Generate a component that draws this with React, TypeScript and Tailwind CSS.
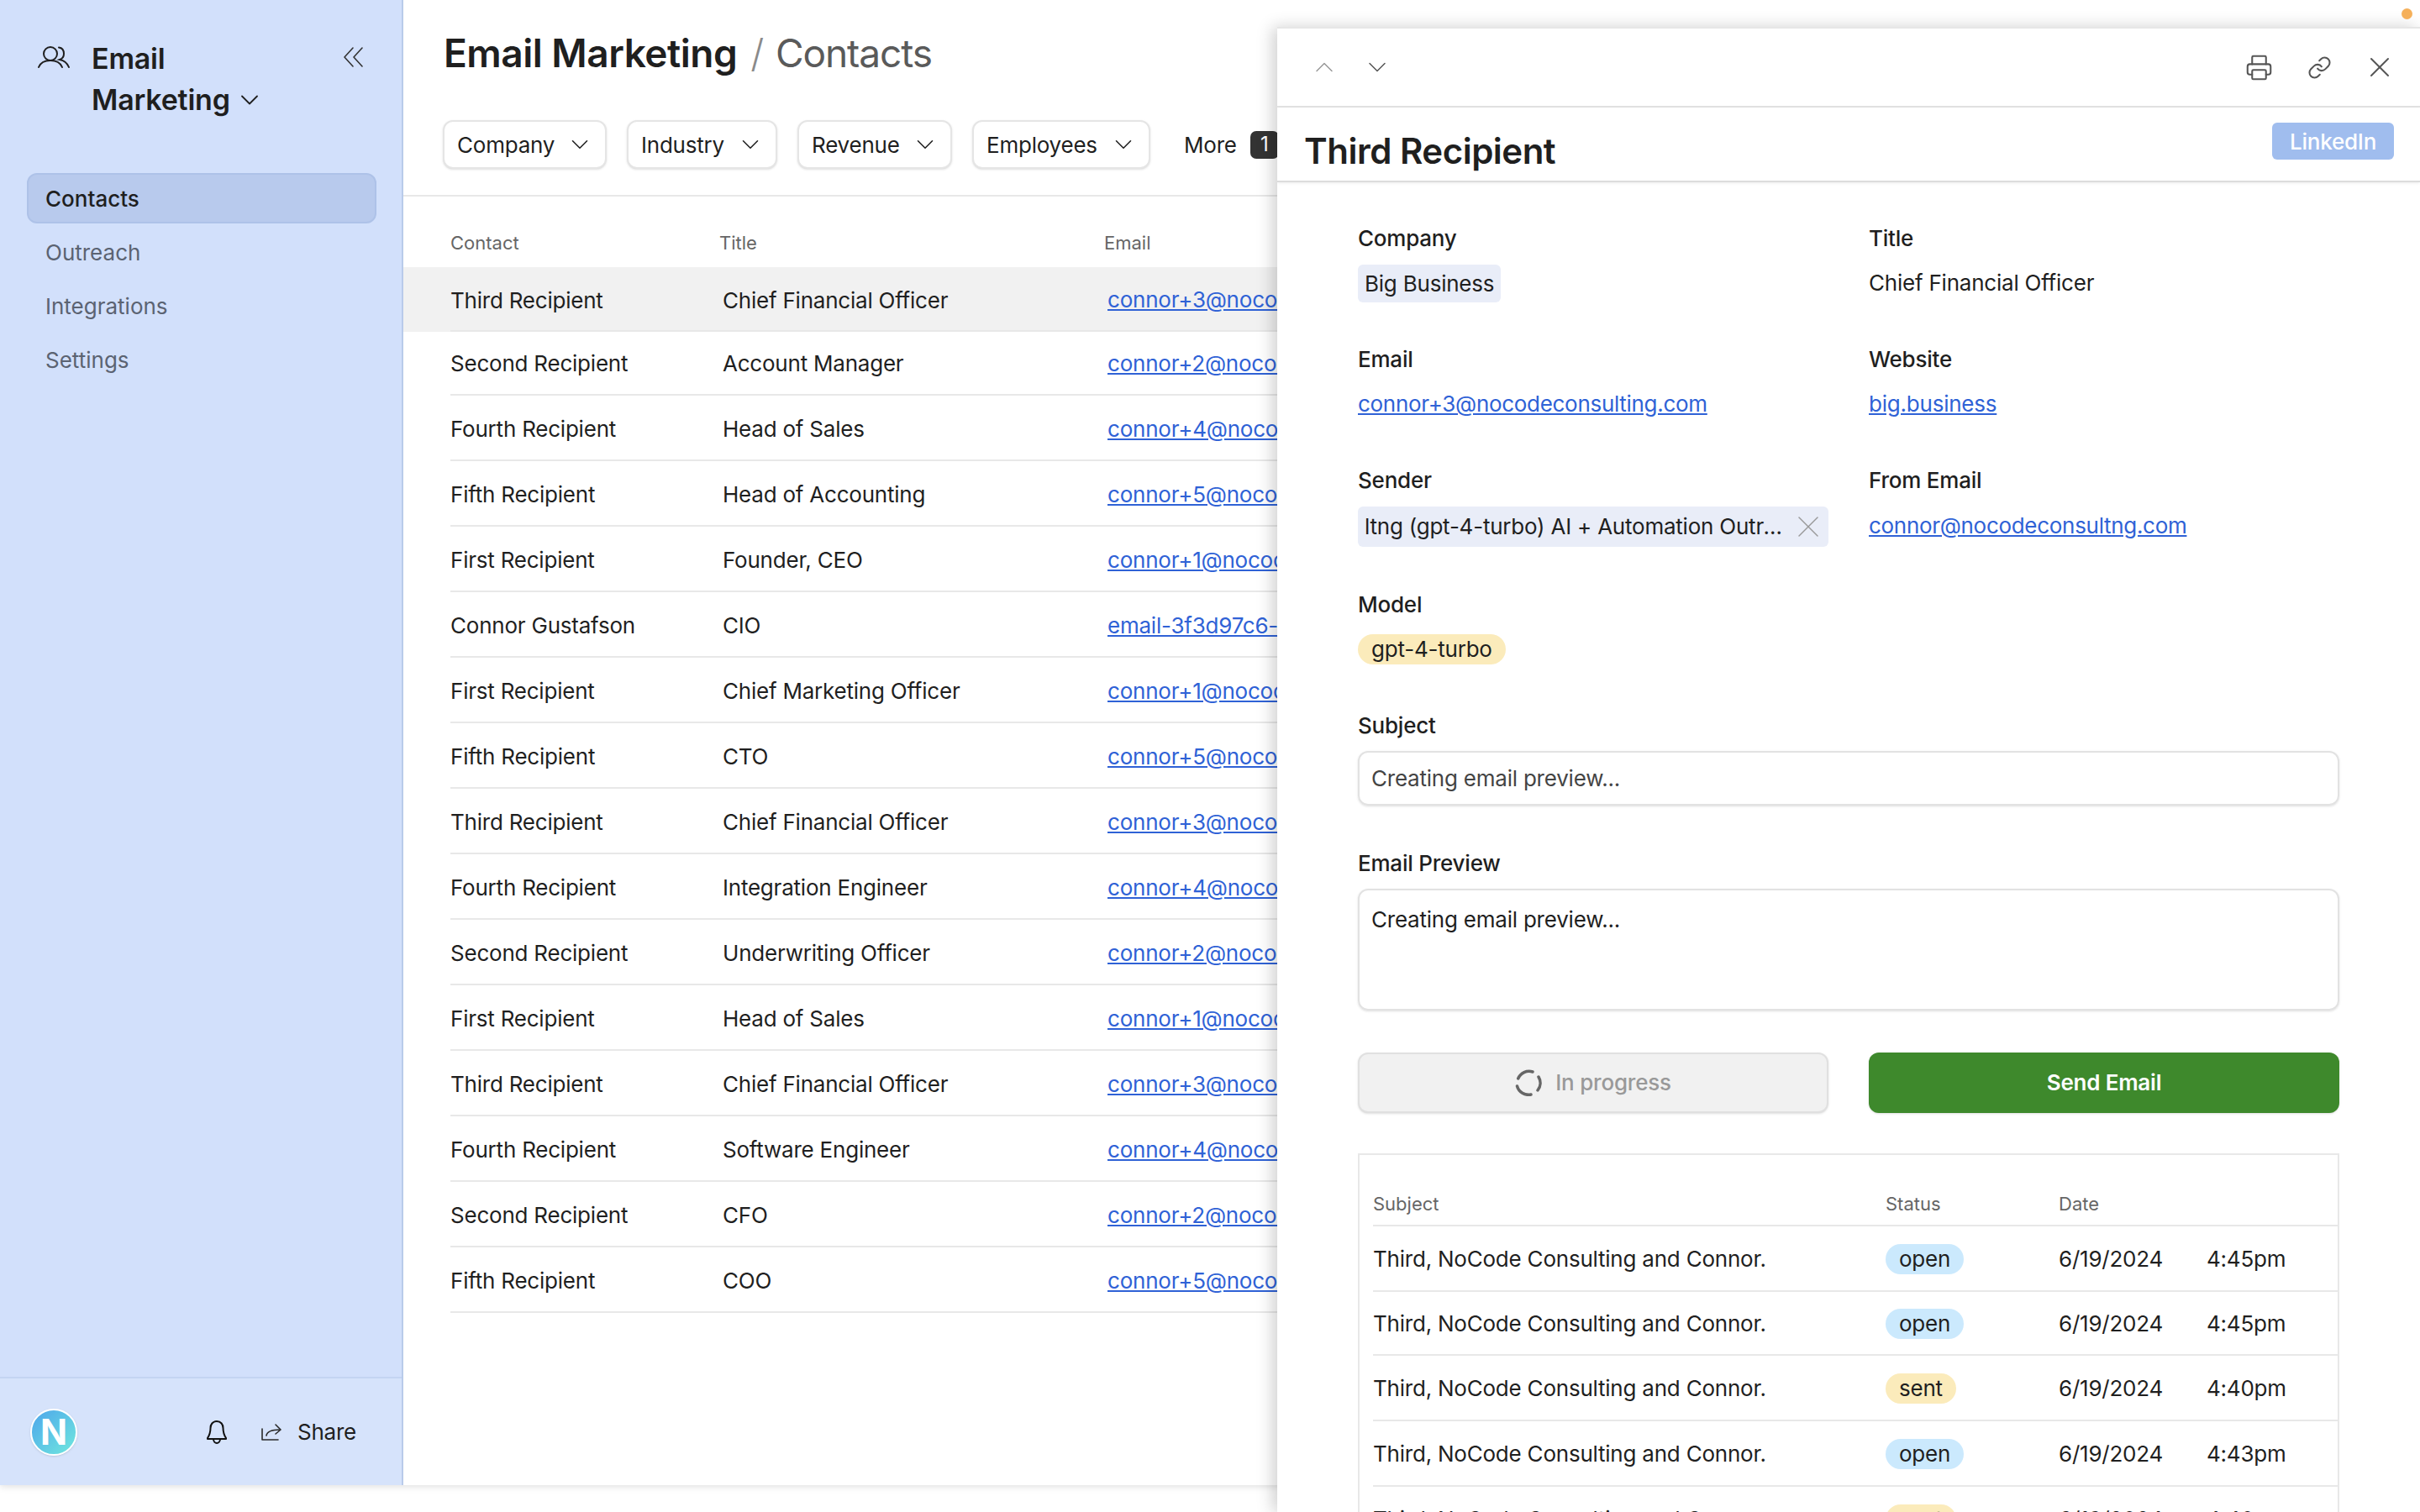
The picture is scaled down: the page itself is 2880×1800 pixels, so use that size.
import { ChevronDown, ChevronUp, Link, Printer, X } from 'lucide-react';

const contacts = [
  ['Third Recipient', 'Chief Financial Officer', 'connor+3@nocodeconsulting.com'],
  ['Second Recipient', 'Account Manager', 'connor+2@nocodeconsulting.com'],
  ['Fourth Recipient', 'Head of Sales', 'connor+4@nocodeconsulting.com'],
  ['Fifth Recipient', 'Head of Accounting', 'connor+5@nocodeconsulting.com'],
  ['First Recipient', 'Founder, CEO', 'connor+1@nocodeconsulting.com'],
  ['Connor Gustafson', 'CIO', 'email-3f3d97c6-nocodeconsulting.com'],
  ['First Recipient', 'Chief Marketing Officer', 'connor+1@nocodeconsulting.com'],
  ['Fifth Recipient', 'CTO', 'connor+5@nocodeconsulting.com'],
  ['Third Recipient', 'Chief Financial Officer', 'connor+3@nocodeconsulting.com'],
  ['Fourth Recipient', 'Integration Engineer', 'connor+4@nocodeconsulting.com'],
  ['Second Recipient', 'Underwriting Officer', 'connor+2@nocodeconsulting.com'],
  ['First Recipient', 'Head of Sales', 'connor+1@nocodeconsulting.com'],
  ['Third Recipient', 'Chief Financial Officer', 'connor+3@nocodeconsulting.com'],
  ['Fourth Recipient', 'Software Engineer', 'connor+4@nocodeconsulting.com'],
  ['Second Recipient', 'CFO', 'connor+2@nocodeconsulting.com'],
  ['Fifth Recipient', 'COO', 'connor+5@nocodeconsulting.com'],
];

const emails = [
  ['open', '4:45pm'],
  ['open', '4:45pm'],
  ['sent', '4:40pm'],
  ['open', '4:43pm'],
  ['sent', '4:40pm'],
];

const filters = [
  ['Company', 'w-[195px]'],
  ['Industry', 'w-[179px]'],
  ['Revenue', 'w-[184px]'],
  ['Employees', 'w-[212px]'],
];

const UsersIcon = () => (
  <svg width="38" height="26" viewBox="0 0 38 26" fill="none" stroke="#1f1f1f" strokeWidth="2" strokeLinecap="round">
    <circle cx="15" cy="9" r="8" />
    <path d="M1 25c2-5 7-8 14-8s12 3 14 8" />
    <path d="M25 1.5c4 .5 6 3.500 6 7.500 0 3-2 6-5 7 5 1 9 4 11 9" />
  </svg>
);

const DoubleChevronIcon = () => (
  <svg width="24" height="24" viewBox="0 0 24 24" fill="none" stroke="#333" strokeWidth="1.600" strokeLinecap="round" strokeLinejoin="round">
    <path d="M12 1 2 12l10 11" />
    <path d="M23 1 13 12l10 11" />
  </svg>
);

const ShareIcon = () => (
  <svg width="24" height="20" viewBox="0 0 24 20" fill="none" stroke="#2a2a2a" strokeWidth="1.600" strokeLinecap="round" strokeLinejoin="round">
    <path d="M1 6v13h19" />
    <path d="M6 14c1-5 6-7 16-7" />
    <path d="M17 1l6 6-6 5" />
  </svg>
);

const BellIcon = () => (
  <svg width="24" height="28" viewBox="0 0 24 28" fill="none" stroke="#111" strokeWidth="2" strokeLinejoin="round">
    <path d="M12 1c-5 0-7.500 4-7.500 8 0 6-1.500 9-3.500 12v1h22v-1c-2-3-3.500-6-3.500-12 0-4-2.500-8-7.500-8z" />
    <path d="M8 22c0 3 2 5 4 5s4-2 4-5" />
  </svg>
);

const Spinner = () => (
  <svg width="32" height="32" viewBox="0 0 32 32" fill="none" stroke="#666" strokeWidth="3.500" strokeLinecap="round">
    <path d="M3.700 11A14 14 0 0 1 21 3" />
    <path d="M28 9a14 14 0 0 1-1 16" />
    <path d="M2.500 20A14 14 0 0 0 19 30" />
  </svg>
);

const Label = ({ children }: { children: string }) => (
  <div className="h-[32px] text-[26px] leading-[32px] font-medium text-[#1f1f1f]">{children}</div>
);

const Pill = ({ status }: { status: string }) => (
  <span
    className={`inline-block h-[36px] rounded-full px-[16px] text-[26px] leading-[36px] ${
      status === 'open' ? 'bg-[#cbe9fd]' : 'bg-[#fbebbb]'
    }`}
  >
    {status}
  </span>
);

const mailLink = 'text-[26px] leading-[32px] text-[#2f62d6] underline underline-offset-2';

export default function App() {
  return (
    <div className="relative h-[1800px] w-[2880px] overflow-hidden bg-white font-[Inter,sans-serif] tracking-[-0.22px] text-[#1f1f1f]">
      <div className="flex h-[1768px] shadow-[0_2px_8px_rgba(0,0,0,0.12)]">
        {/* Sidebar */}
        <aside className="flex w-[480px] shrink-0 flex-col border-r-2 border-[#b9cbea] bg-[#d2e0fb]">
          <div className="flex items-start justify-between pt-[45px] pl-[45px] pr-[46px]">
            <div className="mt-[10px]">
              <UsersIcon />
            </div>
            <div className="ml-[26px] flex-1 text-[34px] leading-[49px] font-semibold tracking-[-0.2px]">
              Email
              <div className="flex items-center gap-[5px]">
                Marketing
                <ChevronDown size={36} strokeWidth={1.200} />
              </div>
            </div>
            <div className="mt-[11px]">
              <DoubleChevronIcon />
            </div>
          </div>

          <nav className="mt-[63px] flex flex-col pl-[32px] pr-[30px] text-[26px] tracking-normal">
            <div className="flex h-[60px] items-center rounded-[12px] border-2 border-[#aec2e8] bg-[#b8caed] pl-[20px] font-medium">
              Contacts
            </div>
            {['Outreach', 'Integrations', 'Settings'].map((item) => (
              <div key={item} className="mt-[4px] flex h-[60px] items-center pl-[22px] text-[#5b6372]">
                {item}
              </div>
            ))}
          </nav>

          <div className="mt-auto flex h-[129px] items-center border-t-2 border-[#c4d4f2] bg-[#d6e3fb] pl-[36px] pr-[54px]">
            <div className="flex h-[56px] w-[56px] items-center justify-center rounded-full border-2 border-white bg-gradient-to-br from-[#4fa5ea] to-[#71e8dd] text-[42px] font-bold text-white shadow-sm">
              N
            </div>
            <div className="ml-auto flex items-center gap-[41px]">
              <BellIcon />
              <div className="flex items-center gap-[19px] text-[26px]">
                <ShareIcon />
                Share
              </div>
            </div>
          </div>
        </aside>

        {/* Contacts list */}
        <main className="min-w-0 flex-1">
          <div className="h-[234px] border-b-2 border-[#e8e8e8] pl-[47px]">
            <div className="flex h-[143px] items-center pb-[16px] pl-[1px] text-[46px]">
              <span className="font-semibold tracking-[-0.5px]">Email Marketing</span>
              <span className="ml-[16px] font-light text-[#8a8a8a]">/</span>
              <span className="ml-[14px] tracking-[-1.100px] text-[#5a5a5a]">Contacts</span>
            </div>
            <div className="flex h-[58px] items-center gap-[24px] text-[26px]">
              {filters.map(([name, width]) => (
                <div
                  key={name}
                  className={`flex h-[58px] items-center justify-between rounded-[12px] border-2 border-[#e5e5e5] bg-white pl-[15px] pr-[13px] shadow-sm ${width}`}
                >
                  {name}
                  <ChevronDown size={34} strokeWidth={1.100} />
                </div>
              ))}
              <span className="ml-[16px]">More</span>
              <span className="-ml-[8px] flex h-[33px] w-[34px] items-center justify-center rounded-[7px] bg-[#333] text-[24px] text-white">
                1
              </span>
            </div>
          </div>

          <div className="flex h-[84px] items-center pl-[56px] pt-[26px] text-[22px] tracking-normal text-[#666]">
            <span className="w-[320px]">Contact</span>
            <span className="w-[458px]">Title</span>
            <span>Email</span>
          </div>

          {contacts.map(([name, title, email], index) => (
            <div
              key={index}
              className={`flex items-center text-[26px] ${index === 0 ? 'h-[77px] bg-[#f1f1f1]' : index === 1 ? 'h-[76px]' : 'h-[78px]'}`}
            >
              <div className={`ml-[56px] flex h-full flex-1 items-center border-b-2 border-[#e8e8e8] ${index === 1 ? 'pt-[1px]' : 'pt-[3px]'}`}>
                <span className="w-[324px]">{name}</span>
                <span className="w-[458px]">{title}</span>
                <span className={`${mailLink} whitespace-nowrap`}>{email}</span>
              </div>
            </div>
          ))}
        </main>
      </div>

      {/* Detail panel */}
      <div className="absolute top-[32px] right-0 bottom-0 w-[1360px] overflow-hidden border-t-2 border-[#e6e6e6] bg-white shadow-[-6px_0_18px_rgba(0,0,0,0.18)]">
        <div className="flex h-[94px] items-center justify-between border-b-2 border-[#e2e2e2] pl-[38px] pr-[28px]">
          <div className="flex items-center gap-[27px]">
            <ChevronUp size={36} strokeWidth={1} className="text-[#999]" />
            <ChevronDown size={36} strokeWidth={1} className="text-[#555]" />
          </div>
          <div className="flex items-center text-[#555]">
            <Printer size={33} strokeWidth={1.500} />
            <Link size={29} strokeWidth={1.700} className="ml-[41px]" />
            <X size={40} strokeWidth={1.200} className="ml-[37px]" />
          </div>
        </div>

        <div className="relative h-[89px] border-b-2 border-[#dcdcdc] pl-[32px] shadow-[0_1px_3px_rgba(0,0,0,0.08)]">
          <div className="pt-[27px] text-[42px] leading-[50px] font-semibold tracking-[-0.5px]">Third Recipient</div>
          <div className="absolute top-[18px] right-[31px] flex h-[44px] w-[145px] items-center justify-center rounded-[6px] bg-[#a0bdee] text-[26px] font-medium text-white">
            LinkedIn
          </div>
        </div>

        <div className="px-[96px] pt-[51px]">
          <div className="grid grid-cols-2 gap-x-[48px] text-[26px] leading-[32px]">
            <div className="h-[144px]">
              <Label>Company</Label>
              <div className="mt-[15px] inline-block h-[45px] rounded-[6px] bg-[#e9edf8] px-[8px] leading-[45px]">Big Business</div>
            </div>
            <div className="h-[144px]">
              <Label>Title</Label>
              <div className="mt-[21px]">Chief Financial Officer</div>
            </div>
            <div className="h-[144px]">
              <Label>Email</Label>
              <div className="mt-[21px]"><span className={`${mailLink} tracking-[-0.3px]`}>connor+3@nocodeconsulting.com</span></div>
            </div>
            <div className="h-[144px]">
              <Label>Website</Label>
              <div className="mt-[21px]"><span className={mailLink}>big.business</span></div>
            </div>
            <div className="h-[148px]">
              <Label>Sender</Label>
              <div className="mt-[15px] flex h-[48px] items-center rounded-[6px] bg-[#e9edf8] pl-[8px] pr-[2px]">
                <span className="w-[502px] truncate">ltng (gpt-4-turbo) AI + Automation Outreach Sender</span>
                <X size={44} strokeWidth={0.800} className="ml-auto text-[#999]" />
              </div>
            </div>
            <div className="h-[148px]">
              <Label>From Email</Label>
              <div className="mt-[22px]"><span className={`${mailLink} tracking-[-0.3px]`}>connor@nocodeconsultng.com</span></div>
            </div>
            <div className="col-span-2 h-[144px]">
              <Label>Model</Label>
              <div className="mt-[19px] inline-block h-[36px] rounded-full bg-[#fbebbb] px-[16px] leading-[36px]">gpt-4-turbo</div>
            </div>
            <div className="col-span-2 h-[164px]">
              <Label>Subject</Label>
              <div className="mt-[14px] flex h-[65px] items-center rounded-[12px] border-2 border-[#e2e2e2] pl-[14px] text-[#444] shadow-sm">
                Creating email preview...
              </div>
            </div>
            <div className="col-span-2 h-[241px]">
              <Label>Email Preview</Label>
              <div className="mt-[14px] h-[145px] rounded-[12px] border-2 border-[#e2e2e2] pt-[19px] pl-[14px] shadow-sm">
                Creating email preview...
              </div>
            </div>
            <div className="flex h-[72px] items-center justify-center gap-[16px] rounded-[12px] border-2 border-[#e0e0e0] bg-[#f1f1f1] font-medium text-[#999] shadow-sm">
              <Spinner />
              In progress
            </div>
            <div className="flex h-[72px] items-center justify-center rounded-[12px] bg-[#3e892c] font-semibold text-white shadow-sm">
              Send Email
            </div>
          </div>

          <div className="mt-[48px] border-x-2 border-t-2 border-[#e8e8e8] pl-[16px]">
            <div className="flex h-[85px] items-center border-b-2 border-[#e8e8e8] pt-[34px] text-[22px] tracking-normal text-[#666]">
              <span className="w-[610px]">Subject</span>
              <span className="w-[206px]">Status</span>
              <span>Date</span>
            </div>
            {emails.map(([status, time], index) => (
              <div key={index} className={`flex items-center border-b-2 border-[#e8e8e8] text-[26px] ${index === 1 ? 'h-[76px]' : 'h-[78px]'}`}>
                <span className="w-[610px]">Third, NoCode Consulting and Connor.</span>
                <span className="w-[206px]"><Pill status={status} /></span>
                <span className="w-[176px]">6/19/2024</span>
                <span>{time}</span>
              </div>
            ))}
          </div>
        </div>
      </div>

      {/* Window dot */}
      <div className="absolute top-[10px] right-[9px] h-[13px] w-[13px] rounded-full bg-[#f5b05a]" />
    </div>
  );
}
